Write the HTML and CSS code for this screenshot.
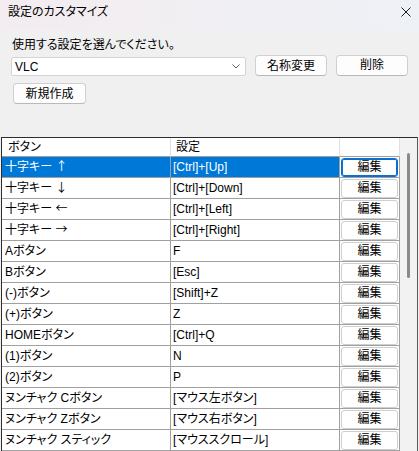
FILE: index.html
```html
<!DOCTYPE html>
<html lang="ja">
<head>
<meta charset="utf-8">
<title>設定のカスタマイズ</title>
<link rel="stylesheet" href="styles.css">
</head>
<body>
<div class="window">
  <div class="titlebar">
    <span class="title">設定のカスタマイズ</span>
    <svg class="close" width="10" height="10" viewBox="0 0 10 10"><path d="M0.5 0.5 L9.5 9.5 M9.5 0.5 L0.5 9.5" stroke="#1a1a1a" stroke-width="1" fill="none"/></svg>
  </div>
  <div class="form">
    <div class="label">使用する設定を選んでください。</div>
    <div class="row">
      <div class="combo">
        <span class="combo-text">VLC</span>
        <svg class="chev" width="8" height="5" viewBox="0 0 8 5"><path d="M0.5 0.5 L4 4 L7.5 0.5" stroke="#606060" stroke-width="1" fill="none"/></svg>
      </div>
      <button class="btn btn-rename">名称変更</button>
      <button class="btn btn-delete">削除</button>
    </div>
    <button class="btn btn-new">新規作成</button>
  </div>
  <div class="list">
    <table class="grid">
      <colgroup><col class="c1"><col class="c2"><col class="c3"></colgroup>
      <thead>
        <tr><th class="h1">ボタン</th><th class="h2">設定</th><th class="h3"></th></tr>
      </thead>
      <tbody>
        <tr class="sel"><td class="k">十字キー <span class="arrow">↑</span></td><td class="v">[Ctrl]+[Up]</td><td class="e"><button class="edit focus">編集</button></td></tr>
        <tr><td class="k">十字キー <span class="arrow">↓</span></td><td class="v">[Ctrl]+[Down]</td><td class="e"><button class="edit">編集</button></td></tr>
        <tr><td class="k">十字キー <span class="arrow">←</span></td><td class="v">[Ctrl]+[Left]</td><td class="e"><button class="edit">編集</button></td></tr>
        <tr><td class="k">十字キー <span class="arrow">→</span></td><td class="v">[Ctrl]+[Right]</td><td class="e"><button class="edit">編集</button></td></tr>
        <tr><td class="k">Aボタン</td><td class="v">F</td><td class="e"><button class="edit">編集</button></td></tr>
        <tr><td class="k">Bボタン</td><td class="v">[Esc]</td><td class="e"><button class="edit">編集</button></td></tr>
        <tr><td class="k">(-)ボタン</td><td class="v">[Shift]+Z</td><td class="e"><button class="edit">編集</button></td></tr>
        <tr><td class="k">(+)ボタン</td><td class="v">Z</td><td class="e"><button class="edit">編集</button></td></tr>
        <tr><td class="k">HOMEボタン</td><td class="v">[Ctrl]+Q</td><td class="e"><button class="edit">編集</button></td></tr>
        <tr><td class="k">(1)ボタン</td><td class="v">N</td><td class="e"><button class="edit">編集</button></td></tr>
        <tr><td class="k">(2)ボタン</td><td class="v">P</td><td class="e"><button class="edit">編集</button></td></tr>
        <tr><td class="k">ヌンチャク Cボタン</td><td class="v">[マウス左ボタン]</td><td class="e"><button class="edit">編集</button></td></tr>
        <tr><td class="k">ヌンチャク Zボタン</td><td class="v">[マウス右ボタン]</td><td class="e"><button class="edit">編集</button></td></tr>
        <tr><td class="k">ヌンチャク スティック</td><td class="v">[マウススクロール]</td><td class="e"><button class="edit">編集</button></td></tr>
      </tbody>
    </table>
    <div class="scrollbar"><div class="thumb"></div></div>
  </div>
</div>
</body>
</html>
```
FILE: styles.css
```css
* { box-sizing: border-box; }
html, body { margin: 0; padding: 0; }
body {
  font-family: "Liberation Sans", "Noto Sans CJK JP", sans-serif;
  font-size: 12px;
  font-feature-settings: "palt";
  color: #000;
  background: #f0f0f0;
}
.window {
  width: 419px;
  height: 451px;
  overflow: hidden;
  background: #f0f0f0;
  display: flex;
  flex-direction: column;
}
.titlebar {
  height: 30px;
  flex: none;
  background: linear-gradient(90deg, #f3ecf0 0%, #f1eff3 50%, #eef1f6 100%);
  display: flex;
  justify-content: space-between;
  align-items: flex-start;
  padding: 4px 8px 0 8px;
}
.title { line-height: 16px; }
.close { margin-top: 3px; }
.form {
  padding-left: 11px;
  display: flex;
  flex-direction: column;
  align-items: flex-start;
}
.label {
  line-height: 16px;
  margin-top: 7px;
  padding-left: 1px;
}
.row {
  display: flex;
  align-items: center;
  margin-top: 1px;
  height: 23px;
}
.combo {
  width: 235px;
  height: 19px;
  margin-top: 2px;
  background: #fff;
  border: 1px solid #d4d4d4;
  border-radius: 2px;
  display: flex;
  align-items: center;
  justify-content: space-between;
  padding: 0 5px 0 3px;
}
.combo-text { line-height: 16px; }
.btn {
  font: inherit;
  font-feature-settings: "palt";
  color: #000;
  background: #fdfdfd;
  border: 1px solid #d0d0d0;
  border-bottom-color: #b9b9b9;
  border-radius: 4px;
  height: 21px;
  padding: 0;
  line-height: 18px;
}
.btn-rename { width: 72px; margin-left: 9px; }
.btn-delete { width: 72px; margin-left: 9px; margin-top: -1px; }
.btn-new { width: 73px; margin-left: 2px; margin-top: 6px; }
.list {
  margin-top: 33px;
  margin-left: 1px;
  width: 417px;
  flex: 1;
  border-top: 1px solid #2e2e2e;
  border-left: 1px solid #2e2e2e;
  border-right: 1px solid #5a5a5a;
  display: flex;
  align-items: flex-start;
}
.grid {
  width: 398px;
  flex: none;
  table-layout: fixed;
  border-collapse: separate;
  border-spacing: 0;
  background: #fff;
}
.c1 { width: 169px; }
.c2 { width: 169px; }
.c3 { width: 60px; }
.grid th, .grid td {
  border-right: 1px solid #a0a0a0;
  border-bottom: 1px solid #a0a0a0;
  padding: 0;
  white-space: nowrap;
  overflow: hidden;
  text-align: left;
  font-weight: normal;
}
.grid th { height: 19px; line-height: 18px; }
.grid th.h1 { padding-left: 6px; }
.grid th.h2 { padding-left: 5px; }
.grid th.h1, .grid th.h2, .grid th.h3 { border-right-color: #e0e0e0; }
.grid td { height: 21px; line-height: 20px; }
.grid td.k { padding-left: 3px; }
.grid td.v { padding-left: 2px; }
.grid td.e { padding: 0 1px 0 1px; background: #fff; }
.arrow {
  font-family: "Noto Sans CJK JP", sans-serif;
  font-feature-settings: normal;
  font-size: 12px;
  line-height: 0;
}
.sel td.k, .sel td.v { background: #0078d7; color: #fff; }
.edit {
  font: inherit;
  font-feature-settings: "palt";
  color: #000;
  display: block;
  width: 57px;
  height: 19px;
  margin: 0;
  padding: 0;
  line-height: 17px;
  background: #fff;
  border: 1px solid #cfcfcf;
  border-radius: 3px;
}
.edit.focus {
  border: 1px solid #0a6fd1;
  box-shadow: inset 0 0 0 1px #0a6fd1;
}
.scrollbar {
  width: 17px;
  flex: none;
  align-self: stretch;
  background: #f2f2f2;
  padding-top: 15px;
  padding-left: 7px;
}
.thumb {
  width: 3px;
  height: 125px;
  background: #8a8a8a;
  border-radius: 2px;
}
```
